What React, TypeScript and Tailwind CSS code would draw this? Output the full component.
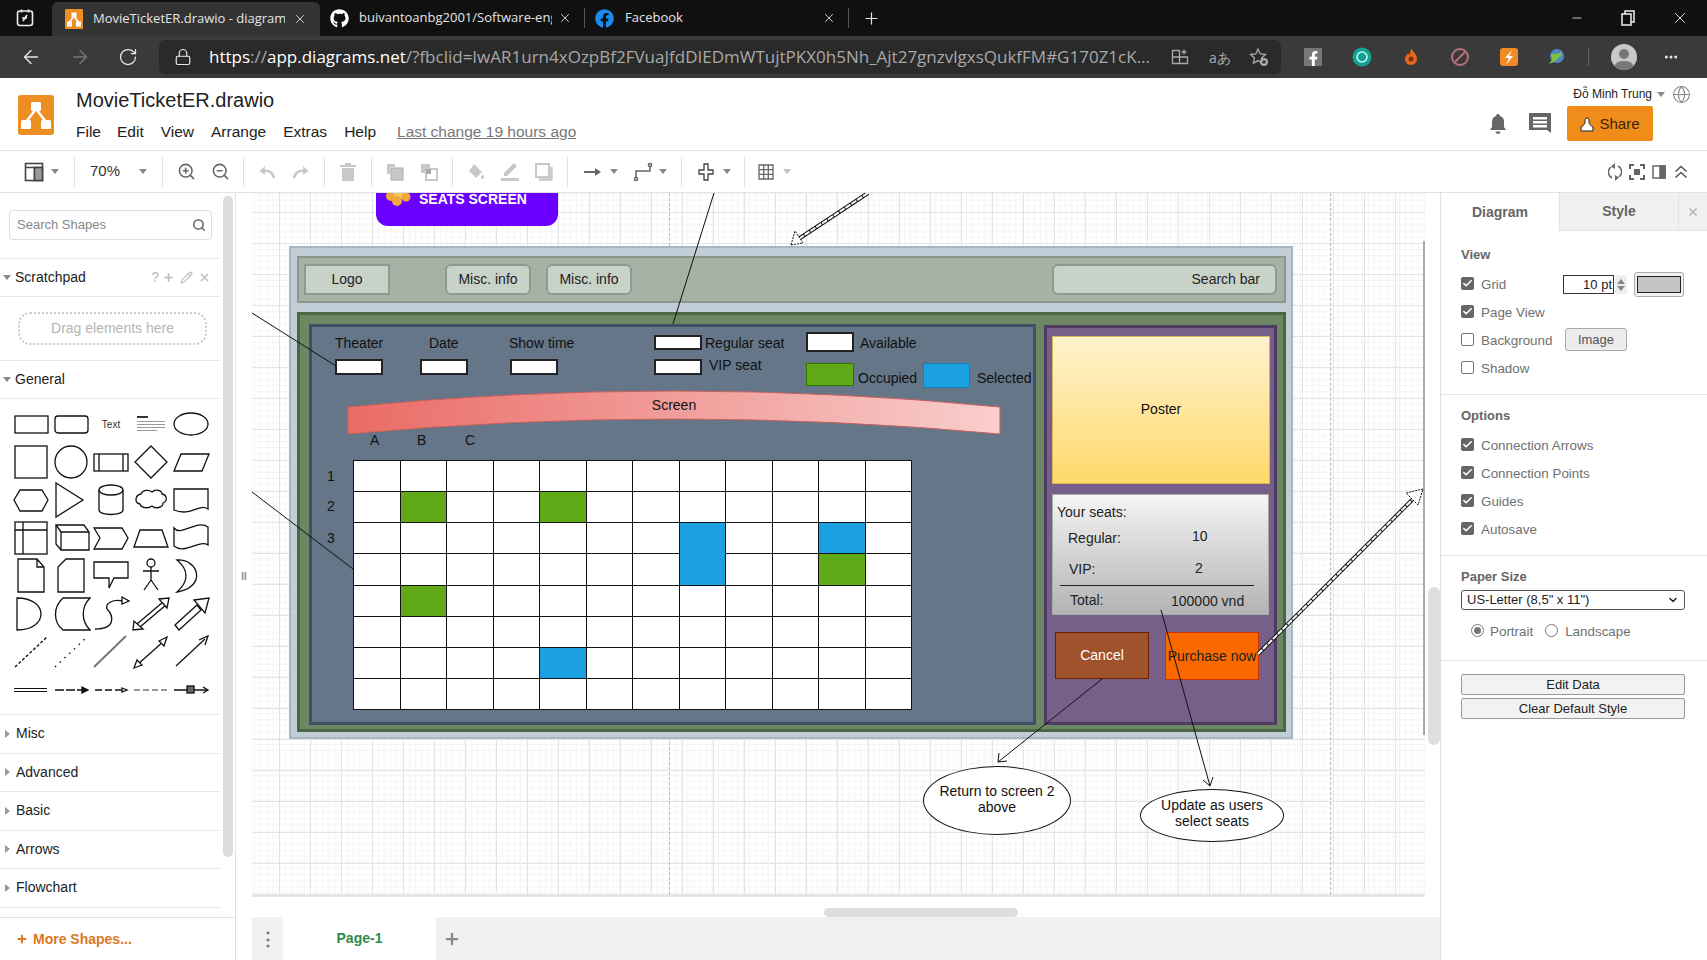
import { ArrowLeft, ArrowRight, Check, ChevronDown, Globe, Lock, Minus, MoreHorizontal, Pencil, Plus, RotateCw, Search, X, ZoomIn, ZoomOut } from "lucide-react";
import { FaFacebook, FaFacebookF, FaGithub } from "react-icons/fa";
import type { ReactNode } from "react";

function Caret({ className = "" }: { className?: string }) {
  return <span className={`inline-block h-0 w-0 shrink-0 border-x-[4px] border-t-[5px] border-x-transparent border-t-[#8a8a8a] ${className}`} />;
}

function Divider({ className = "" }: { className?: string }) {
  return <span className={`h-[30px] w-px shrink-0 bg-[#e0e0e0] ${className}`} />;
}

function Tool({ children, className = "w-[34px]" }: { children: ReactNode; className?: string }) {
  return <span className={`flex h-[30px] shrink-0 items-center justify-center ${className}`}>{children}</span>;
}

function DrawioLogo() {
  return (
    <svg viewBox="0 0 36 40" className="h-10 w-9 shrink-0">
      <rect width="36" height="40" rx="3" fill="#ee8f24" />
      <path d="M18 14 L8 27 M18 14 L28 27" stroke="#fff" strokeWidth="2.5" />
      <rect x="13" y="7" width="10" height="9" rx="1.5" fill="#fff" />
      <rect x="3" y="25" width="10" height="9" rx="1.5" fill="#fff" />
      <rect x="23" y="25" width="10" height="9" rx="1.5" fill="#fff" />
    </svg>
  );
}

function BrowserTabs() {
  return (
    <div className="flex h-9 shrink-0 bg-[#101010] font-['Open_Sans',sans-serif] text-[13px] text-[#e4e4e4]">
      <div className="flex w-[52px] items-center justify-center">
        <svg viewBox="0 0 20 20" className="mr-[2px] h-5 w-5" fill="none" stroke="#eee" strokeWidth="1.6">
          <rect x="2.5" y="3" width="15" height="14.5" rx="2.5" />
          <path d="M6.5 1.5v3M13.5 1.5v3M8 13l4-6M7 10h5" />
        </svg>
      </div>
      <div className="mt-[2px] flex w-[268px] items-center rounded-t-md bg-[#333] pl-[13px]">
        <svg viewBox="0 0 18 20" className="h-5 w-[18px] shrink-0">
          <rect width="18" height="20" rx="1" fill="#ee8f24" />
          <path d="M9 7 L4 14 M9 7 L14 14" stroke="#fff" strokeWidth="1.5" />
          <rect x="6.5" y="3.5" width="5" height="5" fill="#fff" />
          <rect x="2" y="12.5" width="5" height="5" fill="#fff" />
          <rect x="11" y="12.5" width="5" height="5" fill="#fff" />
        </svg>
        <span className="ml-[10px] w-[192px] overflow-hidden whitespace-nowrap">MovieTicketER.drawio - diagrams.net</span>
        <X className="ml-[8px] h-[14px] w-[14px]" strokeWidth={1.5} />
      </div>
      <div className="flex w-[264px] items-center pl-[10px]">
        <FaGithub className="h-[19px] w-[19px] shrink-0 text-white" />
        <span className="ml-[10px] w-[193px] overflow-hidden whitespace-nowrap">buivantoanbg2001/Software-engineering</span>
        <X className="ml-[6px] h-[14px] w-[14px]" strokeWidth={1.5} />
      </div>
      <span className="my-[8px] w-px bg-[#555]" />
      <div className="flex w-[263px] items-center pl-[10px]">
        <FaFacebook className="h-[19px] w-[19px] shrink-0 text-[#1b8bf0]" />
        <span className="ml-[11px] w-[200px]">Facebook</span>
        <X className="ml-[-3px] h-[14px] w-[14px]" strokeWidth={1.5} />
      </div>
      <span className="my-[8px] w-px bg-[#555]" />
      <div className="flex w-[44px] items-center justify-center">
        <Plus className="h-[19px] w-[19px]" strokeWidth={1.5} />
      </div>
      <div className="ml-auto flex items-center pr-[18px]">
        <Minus className="mr-[37px] h-[14px] w-[14px]" strokeWidth={1.5} />
        <svg viewBox="0 0 14 16" className="mr-[36px] h-4 w-[14px]" fill="none" stroke="#eee" strokeWidth="1.5">
          <rect x="1" y="4" width="9" height="11" />
          <path d="M4 4V1h9v11h-3" />
        </svg>
        <X className="h-[18px] w-[18px]" strokeWidth={1.3} />
      </div>
    </div>
  );
}

function AddressBar() {
  return (
    <div className="flex h-[42px] shrink-0 items-center bg-[#3a3a3a] text-[#e8e8e8]">
      <ArrowLeft className="ml-[20px] h-[22px] w-[22px]" strokeWidth={1.5} />
      <ArrowRight className="ml-[27px] h-[22px] w-[22px] text-[#777]" strokeWidth={1.5} />
      <RotateCw className="ml-[27px] h-[20px] w-[20px]" strokeWidth={1.5} />
      <div className="ml-[21px] flex h-[34px] w-[1122px] items-center rounded-md bg-[#2a2a2a] font-['Open_Sans',sans-serif] text-[17px]">
        <Lock className="ml-[15px] h-[18px] w-[18px]" strokeWidth={1.6} />
        <span className="ml-[17px] w-[942px] overflow-hidden whitespace-nowrap text-[#a8a8a8]">
          <span className="text-white">https</span>://<span className="text-white">app.diagrams.net</span>/?fbclid=IwAR1urn4xOzpBf2FVuaJfdDIEDmWTujtPKX0h5Nh_Ajt27gnzvlgxsQukfFM#G170Z1cK...
        </span>
        <svg viewBox="0 0 18 18" className="ml-[20px] h-[18px] w-[18px]" fill="none" stroke="#aaa" strokeWidth="1.3">
          <path d="M1.5 2.5h7v13h-7zM8.5 9h8v6.5h-8M1.5 9h7M13 1.5v5M10.5 4h5" />
        </svg>
        <span className="ml-[20px] w-[22px] text-[14px] text-[#aaa]">aあ</span>
        <svg viewBox="0 0 20 20" className="ml-[18px] h-5 w-5" fill="none" stroke="#aaa" strokeWidth="1.3">
          <path d="M9 2l2.2 5 5.3.5-4 3.6 1.1 5.2L9 13.6l-4.6 2.7 1.1-5.2-4-3.6L6.800 7z" />
          <circle cx="15" cy="15" r="4" fill="#aaa" stroke="none" />
          <path d="M15 13v4M13 15h4" stroke="#333" />
        </svg>
      </div>
      <span className="ml-[23px] flex h-[18px] w-[18px] items-end justify-center bg-[#777]">
        <FaFacebookF className="h-[15px] w-[15px] text-white" />
      </span>
      <svg viewBox="0 0 20 20" className="ml-[30px] h-5 w-5">
        <circle cx="10" cy="10" r="9.500" fill="#15a08f" />
        <circle cx="10" cy="10" r="5" fill="none" stroke="#bff" strokeWidth="1.600" />
      </svg>
      <svg viewBox="0 0 20 20" className="ml-[29px] h-5 w-5">
        <path d="M10 1c1 3 6 6 6 11a6 6 0 0 1-12 0c0-3 2-4 3-6 1 1 1 2 1 2 1-2 2-4 2-7z" fill="#e8671b" />
        <circle cx="10" cy="12" r="2.500" fill="#7a2c0a" />
      </svg>
      <svg viewBox="0 0 20 20" className="ml-[29px] h-5 w-5" fill="none" stroke="#b5707a" strokeWidth="2">
        <circle cx="10" cy="10" r="8" />
        <path d="M5 15L15 5" />
      </svg>
      <svg viewBox="0 0 20 20" className="ml-[29px] h-5 w-5">
        <rect x="1" y="1" width="18" height="18" rx="3" fill="#f08a24" />
        <path d="M13 3L6 11h4l-3 7 7-9h-4z" fill="#fff" />
      </svg>
      <svg viewBox="0 0 20 20" className="ml-[28px] h-5 w-5">
        <circle cx="10" cy="9" r="7" fill="#4f86c6" />
        <path d="M4 8c3-3 6 1 10-3 2 3 0 5-3 6-2 3-6 6-9 5 3-2 4-4 2-8z" fill="#7fc241" />
      </svg>
      <span className="ml-[21px] h-[18px] w-px bg-[#666]" />
      <span className="ml-[22px] flex h-[26px] w-[26px] items-end justify-center overflow-hidden rounded-full bg-[#c9c9c9]">
        <svg viewBox="0 0 26 26" className="h-[26px] w-[26px]" fill="#777">
          <circle cx="13" cy="10" r="5" />
          <path d="M3 26c0-8 5-9 10-9s10 1 10 9z" />
        </svg>
      </span>
      <MoreHorizontal className="ml-[26px] h-4 w-4" strokeWidth={2.5} />
    </div>
  );
}

function AppHeader() {
  return (
    <div className="flex h-[72px] shrink-0 bg-white">
      <div className="ml-[18px] mt-[17px]">
        <DrawioLogo />
      </div>
      <div className="ml-[22px] flex flex-col">
        <span className="mt-[9px] text-[20px] leading-[26px] text-[#222]">MovieTicketER.drawio</span>
        <div className="mt-[9px] flex text-[15.5px] leading-5 text-[#222]">
          <span>File</span>
          <span className="ml-[16px]">Edit</span>
          <span className="ml-[17px]">View</span>
          <span className="ml-[17px]">Arrange</span>
          <span className="ml-[17px]">Extras</span>
          <span className="ml-[17px]">Help</span>
          <span className="ml-[21px] text-[#777] underline">Last change 19 hours ago</span>
        </div>
      </div>
      <div className="ml-auto flex flex-col items-end pr-[16px]">
        <div className="mt-[7px] flex h-[18px] items-center text-[12px] text-[#222]">
          <span>Đỗ Minh Trung</span>
          <Caret className="ml-[5px]" />
          <Globe className="ml-[7px] h-[19px] w-[19px] text-[#888]" strokeWidth={1.3} />
        </div>
        <div className="mr-[38px] mt-[3px] flex items-center">
          <svg viewBox="0 0 18 22" className="mr-[21px] h-[22px] w-[18px]" fill="#666">
            <path d="M9 1a2 2 0 0 1 2 2c3 1 4 3 4 6v5l2 3H1l2-3V9c0-3 1-5 4-6a2 2 0 0 1 2-2zM6.500 18.500h5a2.500 2.500 0 0 1-5 0z" />
          </svg>
          <svg viewBox="0 0 24 24" className="mr-[15px] h-[24px] w-[24px]" fill="#666">
            <path d="M1 1h22v20l-4-3H1z" />
            <path d="M5 5h14v2.500H5zM5 9h14v2.500H5zM5 13h14v2.500H5z" fill="#fff" />
          </svg>
          <div className="flex h-[35px] w-[86px] items-center justify-center rounded-[2px] bg-[#f08c1a] pt-[2px] text-[15px] text-[#3a2308]">
            <svg viewBox="0 0 14 16" className="mr-[5px] h-4 w-[14px]" fill="#fff" stroke="#222" strokeWidth="1">
              <path d="M7 1c2 0 2 2 2 4 0 2 1 3 4 5v4H1v-4c3-2 4-3 4-5 0-2 0-4 2-4z" />
            </svg>
            Share
          </div>
        </div>
      </div>
    </div>
  );
}

function Toolbar() {
  const on = "#666";
  const off = "#c8c8c8";
  return (
    <div className="flex h-[43px] shrink-0 items-center border-y border-[#e2e2e2] bg-white pl-[17px] text-[15px] text-[#333]">
      <Tool>
        <svg viewBox="0 0 20 20" className="h-5 w-5" fill="none" stroke="#444" strokeWidth="1.600">
          <rect x="1.500" y="1.500" width="17" height="17" />
          <path d="M1.500 5.500h17M10.500 5.500v13" />
          <rect x="10.500" y="5.500" width="8" height="13" fill="#999" />
        </svg>
      </Tool>
      <Caret className="mr-[15px]" />
      <Divider />
      <span className="ml-[15px] w-[31px]">70%</span>
      <Caret className="ml-[18px]" />
      <Divider className="ml-[15px] mr-[6px]" />
      <Tool><ZoomIn className="h-[19px] w-[19px] text-[#666]" strokeWidth={2} /></Tool>
      <Tool><ZoomOut className="h-[19px] w-[19px] text-[#666]" strokeWidth={2} /></Tool>
      <Divider className="mx-[6px]" />
      <Tool>
        <svg viewBox="0 0 18 14" className="h-[14px] w-[18px]" fill="none" stroke={off} strokeWidth="2.500">
          <path d="M16 13C15 7 10 5 5 6" />
          <path d="M7 1L1.500 6 7 10" fill={off} stroke="none" />
        </svg>
      </Tool>
      <Tool>
        <svg viewBox="0 0 18 14" className="h-[14px] w-[18px]" fill="none" stroke={off} strokeWidth="2.500">
          <path d="M2 13C3 7 8 5 13 6" />
          <path d="M11 1l5.500 5L11 10" fill={off} stroke="none" />
        </svg>
      </Tool>
      <Divider className="mx-[6px]" />
      <Tool>
        <svg viewBox="0 0 16 18" className="h-[18px] w-4" fill={off}>
          <path d="M0 2h16v2H0zM5 0h6v2H5zM2 5h12v13H2z" />
        </svg>
      </Tool>
      <Divider className="mx-[6px]" />
      <Tool>
        <svg viewBox="0 0 18 18" className="h-[18px] w-[18px]" fill={off}>
          <path d="M1 1h8v3H4v7H1z" />
          <rect x="5" y="5" width="12" height="12" fill={off} stroke="#aaa" />
        </svg>
      </Tool>
      <Tool>
        <svg viewBox="0 0 18 18" className="h-[18px] w-[18px]" fill={off}>
          <rect x="1" y="1" width="9" height="9" />
          <rect x="6" y="6" width="11" height="11" fill="#fff" stroke={off} strokeWidth="2" />
          <rect x="6" y="6" width="5" height="5" fill="#aaa" />
        </svg>
      </Tool>
      <Divider className="mx-[6px]" />
      <Tool>
        <svg viewBox="0 0 18 18" className="h-[18px] w-[18px]" fill={off}>
          <path d="M7 1l8 8-6 6-7-7z" />
          <path d="M15.500 11c1.500 2 2 3 1 4.500s-3 0-2.500-1.500z" />
        </svg>
      </Tool>
      <Tool>
        <svg viewBox="0 0 20 20" className="h-5 w-5" fill={off}>
          <path d="M14 1l3 3L7 14H4v-3z" />
          <rect x="1" y="16" width="18" height="3" />
        </svg>
      </Tool>
      <Tool>
        <svg viewBox="0 0 18 18" className="h-[18px] w-[18px]" fill="none" stroke={off} strokeWidth="2">
          <rect x="1" y="1" width="13" height="13" />
          <path d="M4 16.500h12.500V4" strokeWidth="2.500" />
        </svg>
      </Tool>
      <Divider className="ml-[6px] mr-[8px]" />
      <Tool className="w-[34px]">
        <svg viewBox="0 0 18 10" className="h-[10px] w-[18px]" fill={on}>
          <path d="M0 4h12v2H0zM11 1l6 4-6 4z" />
        </svg>
      </Tool>
      <Caret />
      <Tool className="ml-[9px] w-[32px]">
        <svg viewBox="0 0 18 20" className="h-5 w-[18px]" fill="none" stroke={on} strokeWidth="1.500">
          <path d="M2 17v-8h14V3" />
          <circle cx="2" cy="17" r="1.600" fill="#fff" />
          <circle cx="16" cy="3" r="1.600" fill="#fff" />
        </svg>
      </Tool>
      <Caret className="mr-[14px]" />
      <Divider className="mr-[7px]" />
      <Tool>
        <svg viewBox="0 0 16 18" className="h-[18px] w-4" fill="none" stroke="#444" strokeWidth="1.300">
          <path d="M6 1h4v6h5v4h-5v6H6v-6H1V7h5z" />
        </svg>
      </Tool>
      <Caret className="mr-[13px]" />
      <Divider className="mr-[6px]" />
      <Tool className="w-[30px]">
        <svg viewBox="0 0 16 16" className="h-4 w-4" fill="none" stroke={on} strokeWidth="1.300">
          <path d="M1 1h14v14H1zM1 5.700h14M1 10.300h14M5.700 1v14M10.300 1v14" />
        </svg>
      </Tool>
      <Caret className="ml-[2px] border-t-[#c0c0c0]" />
      <div className="ml-auto flex pr-[15px] text-[#666]">
        <Tool className="w-[22px]">
          <svg viewBox="0 0 14 18" className="h-[18px] w-[14px]" fill="none" stroke="#666" strokeWidth="1.500">
            <path d="M3 4a6.500 6.500 0 0 0 1 11M11 14a6.500 6.500 0 0 0-1-11" />
            <path d="M7 0L3 3.500 7 6M7 18l4-3.500L7 12" fill="#666" stroke="none" />
          </svg>
        </Tool>
        <Tool className="w-[22px]">
          <svg viewBox="0 0 16 16" className="h-4 w-4" fill="#666">
            <path d="M0 0h5v2H2v3H0zM11 0h5v5h-2V2h-3zM0 11h2v3h3v2H0zM14 11h2v5h-5v-2h3z" />
            <rect x="5" y="5" width="6" height="6" />
          </svg>
        </Tool>
        <Tool className="w-[22px]">
          <svg viewBox="0 0 14 14" className="h-[14px] w-[14px]" fill="none" stroke="#666" strokeWidth="1.500">
            <rect x="1" y="1" width="12" height="12" />
            <rect x="8" y="1" width="5" height="12" fill="#666" />
          </svg>
        </Tool>
        <Tool className="w-[22px]">
          <svg viewBox="0 0 14 14" className="h-[14px] w-[14px]" fill="none" stroke="#555" strokeWidth="1.600">
            <path d="M1.500 6.500L7 1.500l5.500 5M1.500 12.500L7 7.500l5.500 5" />
          </svg>
        </Tool>
      </div>
    </div>
  );
}

const shapeStroke = { fill: "none", stroke: "#111", strokeWidth: 1.3 };

const shapes: ReactNode[] = [
  <rect x="4" y="11" width="33" height="17" {...shapeStroke} />,
  <rect x="4" y="11" width="33" height="17" rx="3" {...shapeStroke} />,
  null,
  <g fill="#999"><rect x="6" y="11" width="11" height="2" fill="#333" /><rect x="6" y="16" width="28" height="1" /><rect x="6" y="19" width="28" height="1" /><rect x="6" y="22" width="28" height="1" /><rect x="6" y="25" width="20" height="1" /></g>,
  <ellipse cx="20" cy="19" rx="17" ry="11" {...shapeStroke} />,
  <rect x="4" y="3" width="32" height="32" {...shapeStroke} />,
  <circle cx="20" cy="19" r="16" {...shapeStroke} />,
  <g {...shapeStroke}><rect x="3" y="11" width="34" height="17" /><path d="M8 11v17M32 11v17" /></g>,
  <path d="M20 3L36 19 20 35 4 19z" {...shapeStroke} />,
  <path d="M10 11H38L31 28H3z" {...shapeStroke} />,
  <path d="M9 9H31L37 19 31 30H9L3 19z" {...shapeStroke} />,
  <path d="M5 2L32 19 5 36z" {...shapeStroke} />,
  <g {...shapeStroke}><path d="M8 9v20c0 6 24 6 24 0V9" /><ellipse cx="20" cy="9" rx="12" ry="5" /></g>,
  <path d="M10 13c2-5 9-4 11-2 3-3 10-2 10 2 5 1 6 7 1 9 0 5-8 6-11 3-4 3-11 2-12-2-6-1-5-9 1-10z" {...shapeStroke} />,
  <path d="M3 8H37V28C28 22 20 36 3 29z" {...shapeStroke} />,
  <g {...shapeStroke}><rect x="4" y="3" width="32" height="32" /><path d="M4 11h32M12 3v32" /></g>,
  <g {...shapeStroke}><path d="M5 6H33L38 13V31H10L5 25z" /><path d="M5 6L10 13H38M10 13V31" /></g>,
  <path d="M3 9H31L37 19 31 30H3L9 19z" {...shapeStroke} />,
  <path d="M9 11H31L37 28H3z" {...shapeStroke} />,
  <path d="M3 9C10 18 26 0 37 8V26C28 20 14 36 3 27z" {...shapeStroke} />,
  <path d="M7 2H26L33 10V35H7zM26 2V10H33" {...shapeStroke} />,
  <path d="M15 2H33V35H7V10z" {...shapeStroke} />,
  <path d="M3 5H37V21H23L18 31V21H3z" {...shapeStroke} />,
  <g {...shapeStroke}><circle cx="20" cy="6" r="4" /><path d="M20 10V23M12 14H28M20 23L13 33M20 23L27 33" /></g>,
  <path d="M6 3C28 2 36 30 6 35 18 24 18 13 6 3z" {...shapeStroke} />,
  <path d="M6 3C38 3 38 35 6 35z" {...shapeStroke} />,
  <path d="M12 3H39C30 12 30 26 39 35H12C2 27 2 12 12 3z" {...shapeStroke} />,
  <g {...shapeStroke}><path d="M4 34C26 34 22 20 16 14 14 8 22 4 32 6" /><path d="M31 2L38 6 31 9z" fill="#fff" /></g>,
  <g {...shapeStroke}><path d="M6 29L32 7M9 32L35 10" /><path d="M28 4L38 3 36 13zM3 26L2 35 12 34z" fill="#fff" /></g>,
  <g {...shapeStroke}><path d="M4 30L26 10 30 15 8 35z" /><path d="M23 5L38 3 34 18z" fill="#fff" /></g>,
  <path d="M4 34L36 4" fill="none" stroke="#111" strokeWidth="1.400" strokeDasharray="3 2" />,
  <path d="M4 34L36 4" fill="none" stroke="#111" strokeWidth="1.400" strokeDasharray="1.500 5" />,
  <path d="M3 34L35 3" fill="none" stroke="#777" strokeWidth="2" />,
  <g {...shapeStroke}><path d="M6 32L33 8" /><path d="M28 8L36 4 33 13zM3 35L6 27 11 32z" fill="#fff" /></g>,
  <g {...shapeStroke}><path d="M5 33L34 6" /><path d="M28 7L37 3 34 12" /></g>,
  <g fill="none" stroke="#111" strokeWidth="1"><path d="M3 17.500h33M3 20.500h33" /></g>,
  <g {...shapeStroke}><path d="M4 19h28" strokeDasharray="9 2" /><path d="M31 16l6 3-6 3z" fill="#111" /></g>,
  <g {...shapeStroke}><path d="M4 19h28" strokeDasharray="7 3" /><path d="M31 17l5 2-5 2z" fill="#fff" /></g>,
  <g fill="none" stroke="#333" strokeWidth="1.200"><path d="M3 19h33" strokeDasharray="6 3" /></g>,
  <g {...shapeStroke}><path d="M3 19h34" /><rect x="16" y="15" width="7" height="7" fill="#666" /><path d="M32 16l5 3-5 3" /></g>,
];

function Section({ title }: { title: string }) {
  return (
    <div className="flex h-[38.5px] items-center border-b border-[#e8e8e8] text-[14px] text-[#222]">
      <span className="ml-[5px] mr-[6px] inline-block h-0 w-0 border-y-[4px] border-l-[5px] border-y-transparent border-l-[#999]" />
      {title}
    </div>
  );
}

function Sidebar() {
  return (
    <div className="flex w-[236px] shrink-0 flex-col border-r border-[#e2e2e2] bg-white">
      <div className="flex h-[724px]">
        <div className="w-[220px]">
          <div className="h-[66px] border-b border-[#e8e8e8] pl-[9px] pt-[17px]">
            <div className="flex h-[30px] w-[203px] items-center justify-between rounded-[4px] border border-[#ddd] pl-[7px] pr-[5px] text-[13px] text-[#888]">
              Search Shapes
              <Search className="h-[14px] w-[14px] text-[#777]" strokeWidth={3} />
            </div>
          </div>
          <div className="flex h-[38px] items-center border-b border-[#e8e8e8] text-[14px] text-[#222]">
            <Caret className="ml-[3px] mr-[4px]" />
            Scratchpad
            <div className="ml-auto mr-[9px] flex items-center gap-[3px] text-[#bbb]">
              <span className="text-[14px]">?</span>
              <Plus className="h-[13px] w-[13px]" strokeWidth={3} />
              <Pencil className="ml-[2px] h-[13px] w-[13px]" strokeWidth={2} />
              <X className="ml-[2px] h-[13px] w-[13px] text-[#b8c4cc]" strokeWidth={3} />
            </div>
          </div>
          <div className="h-[64px] border-b border-[#e8e8e8] pl-[18px] pt-[15px]">
            <div className="flex h-[33px] w-[189px] items-center justify-center rounded-[12px] border-2 border-dotted border-[#ccc] text-[14px] text-[#b5b5b5]">
              Drag elements here
            </div>
          </div>
          <div className="flex h-[38px] items-center border-b border-[#e8e8e8] text-[14px] text-[#222]">
            <Caret className="ml-[3px] mr-[4px]" />
            General
          </div>
          <div className="h-[316px] border-b border-[#e8e8e8] pl-[11px] pt-[6px]">
            <div className="grid grid-cols-[repeat(5,40px)] auto-rows-[38px]">
              {shapes.map((shape, i) =>
                shape === null ? (
                  <span key={i} className="flex items-center justify-center text-[10px] text-[#333]">Text</span>
                ) : (
                  <svg key={i} viewBox="0 0 40 38" className="h-[38px] w-10">{shape}</svg>
                )
              )}
            </div>
          </div>
          <Section title="Misc" />
          <Section title="Advanced" />
          <Section title="Basic" />
          <Section title="Arrows" />
          <Section title="Flowchart" />
        </div>
        <div className="ml-[3px] mt-[3px] h-[661px] w-[10px] rounded-full bg-[#dcdcdc]" />
      </div>
      <div className="mt-auto flex h-[43px] items-center border-t border-[#e2e2e2] pl-[16px] text-[14px] font-bold text-[#d9791f]">
        <Plus className="mr-[5px] h-[12px] w-[12px]" strokeWidth={4} />
        More Shapes...
      </div>
    </div>
  );
}

const seats: Record<string, string> = {
  "1-1": "bg-[#60a917]",
  "1-4": "bg-[#60a917]",
  "2-7": "bg-[#1ba1e2] border-b-[#1ba1e2]",
  "3-7": "bg-[#1ba1e2]",
  "2-10": "bg-[#1ba1e2]",
  "3-10": "bg-[#60a917]",
  "4-1": "bg-[#60a917]",
  "6-4": "bg-[#1ba1e2]",
};

function SeatGrid() {
  const cells = [];
  for (let r = 0; r < 8; r++) {
    for (let c = 0; c < 12; c++) {
      cells.push(<div key={`${r}-${c}`} className={`border-b border-r border-[#111] ${seats[`${r}-${c}`] ?? "bg-white"}`} />);
    }
  }
  return (
    <div className="absolute left-[101px] top-[267px] grid h-[250px] w-[559px] grid-cols-12 grid-rows-8 border-l border-t border-[#111]">
      {cells}
    </div>
  );
}

function Diagram() {
  const box = "absolute border-2 border-[#222] bg-white";
  const label = "absolute text-[14px] leading-4 text-[#111]";
  const headerBtn = "absolute top-[71px] flex h-[31px] w-[86px] items-center justify-center border-2 border-[#8c9a93] bg-[#c8d2c8] text-[14px] text-[#222]";
  return (
    <>
      {/* popcorn heading cut off at the top of the canvas */}
      <div className="absolute left-[124px] top-[-20px] h-[53px] w-[182px] rounded-b-xl bg-[#6a00ff]">
        <span className="absolute left-[43px] top-[18px] text-[14px] font-bold leading-4 text-white">SEATS SCREEN</span>
        <svg viewBox="0 0 26 16" className="absolute left-[9px] top-[18px] h-4 w-[26px]" fill="#f0a83a">
          <circle cx="6" cy="5" r="5" />
          <circle cx="14" cy="4" r="5" fill="#f6c564" />
          <circle cx="21" cy="6" r="4.500" />
          <circle cx="12" cy="10" r="5" />
        </svg>
      </div>

      <div className="absolute left-[37px] top-[53px] h-[493px] w-[1004px] border-2 border-[#a9b6c0] bg-[#bac8d3]/90" />
      <div className="absolute left-[45px] top-[63px] h-[47px] w-[989px] border-2 border-[#8a9987] bg-[#a3b09f]/90" />
      <div className={headerBtn + " left-[52px]"}>Logo</div>
      <div className={headerBtn + " left-[193px] rounded-md"}>Misc. info</div>
      <div className={headerBtn + " left-[294px] rounded-md"}>Misc. info</div>
      <div className="absolute left-[800px] top-[71px] flex h-[31px] w-[225px] items-center justify-end rounded-md border-2 border-[#8c9a93] bg-[#c8d2c8] pr-[15px] text-[14px] text-[#222]">Search bar</div>

      <div className="absolute left-[45px] top-[119px] h-[420px] w-[989px] border-[3px] border-[#4a6741] bg-[#6d8764]" />
      <div className="absolute left-[57px] top-[131px] h-[401px] w-[727px] border-[3px] border-[#3c5163] bg-[#647687]" />
      <div className="absolute left-[792px] top-[132px] h-[400px] w-[233px] border-[3px] border-[#4f3a63] bg-[#76608a]" />

      <span className={label + " left-[83px] top-[142px]"}>Theater</span>
      <span className={label + " left-[177px] top-[142px]"}>Date</span>
      <span className={label + " left-[257px] top-[142px]"}>Show time</span>
      <div className={box + " left-[83px] top-[166px] h-[16px] w-[48px]"} />
      <div className={box + " left-[168px] top-[166px] h-[16px] w-[48px]"} />
      <div className={box + " left-[258px] top-[166px] h-[16px] w-[48px]"} />
      <div className={box + " left-[402px] top-[142px] h-[15px] w-[48px]"} />
      <div className={box + " left-[402px] top-[166px] h-[16px] w-[48px]"} />
      <span className={label + " left-[453px] top-[142px]"}>Regular seat</span>
      <span className={label + " left-[457px] top-[164px]"}>VIP seat</span>
      <div className={box + " left-[554px] top-[139px] h-[20px] w-[48px]"} />
      <span className={label + " left-[608px] top-[142px]"}>Available</span>
      <div className="absolute left-[554px] top-[170px] h-[23px] w-[48px] border border-[#2d7600] bg-[#60a917]" />
      <span className={label + " left-[606px] top-[177px]"}>Occupied</span>
      <div className="absolute left-[671px] top-[170px] h-[25px] w-[47px] border border-[#1a7fb5] bg-[#1ba1e2]" />
      <span className={label + " left-[725px] top-[177px]"}>Selected</span>

      <svg viewBox="0 0 660 60" className="absolute left-[92px] top-[195px] h-[60px] w-[660px]">
        <defs>
          <linearGradient id="screenFill" x1="0" x2="1" y1="0" y2="0">
            <stop offset="0" stopColor="#ea6b66" />
            <stop offset="1" stopColor="#f8cecc" />
          </linearGradient>
        </defs>
        <path d="M4 19Q330 -13 656 19V46Q330 16 4 46Z" fill="url(#screenFill)" stroke="#c9605c" strokeWidth="1" />
      </svg>
      <span className="absolute left-[346px] top-[204px] w-[152px] text-center text-[14px] leading-4 text-[#111]">Screen</span>
      <span className={label + " left-[118px] top-[239px]"}>A</span>
      <span className={label + " left-[165px] top-[239px]"}>B</span>
      <span className={label + " left-[213px] top-[239px]"}>C</span>
      <span className={label + " left-[75px] top-[275px]"}>1</span>
      <span className={label + " left-[75px] top-[305px]"}>2</span>
      <span className={label + " left-[75px] top-[337px]"}>3</span>
      <SeatGrid />

      <div className="absolute left-[800px] top-[143px] flex h-[148px] w-[218px] items-center justify-center border border-[#d6b656] bg-linear-to-b from-[#fff2cc] to-[#ffd966] pb-[2px] text-[14px] text-[#111]">Poster</div>
      <div className="absolute left-[800px] top-[301px] h-[121px] w-[217px] border border-[#aaa] bg-linear-to-b from-[#f5f5f5] to-[#b3b3b3] text-[14px] leading-4 text-[#222]">
        <span className="absolute left-[4px] top-[9px]">Your seats:</span>
        <span className="absolute left-[15px] top-[35px]">Regular:</span>
        <span className="absolute left-[139px] top-[33px]">10</span>
        <span className="absolute left-[16px] top-[66px]">VIP:</span>
        <span className="absolute left-[142px] top-[65px]">2</span>
        <div className="absolute left-[7px] top-[90px] h-px w-[194px] bg-[#222]" />
        <span className="absolute left-[17px] top-[97px]">Total:</span>
        <span className="absolute left-[118px] top-[98px]">100000 vnd</span>
      </div>
      <div className="absolute left-[803px] top-[439px] flex h-[47px] w-[94px] items-center justify-center border border-[#6d1f00] bg-[#a0522d] text-[14px] text-white">Cancel</div>
      <div className="absolute left-[913px] top-[439px] flex h-[48px] w-[94px] items-center justify-center border border-[#c73500] bg-[#fa6800] text-[14px] text-[#222]">Purchase now</div>

      <div className="absolute left-[671px] top-[573px] flex h-[69px] w-[148px] items-center justify-center rounded-[50%] border border-[#111] bg-white pb-[4px] text-center text-[14px] leading-4 text-[#111]">Return to screen 2<br />above</div>
      <div className="absolute left-[888px] top-[596px] flex h-[53px] w-[144px] items-center justify-center rounded-[50%] border border-[#111] bg-white pb-[6px] text-center text-[14px] leading-4 text-[#111]">Update as users<br />select seats</div>

      <svg className="pointer-events-none absolute left-0 top-0 h-[702px] w-[1173px]" fill="none" stroke="#111">
        <path d="M462 0L421 131" />
        <path d="M0 120L84 173" />
        <path d="M0 299L101 376" />
        <path d="M850 486L746 569M747 560L746 569 755 568" />
        <path d="M909 417L958 593M951 587L958 593 961 584" />
        <path d="M616 0L545 47" strokeWidth="4" />
        <path d="M616 0L545 47" stroke="#fff" strokeWidth="2" strokeDasharray="6 1" />
        <path d="M539 52L551 50 543 38Z" fill="#fff" strokeDasharray="2 1" />
        <path d="M1006 461L1160 307" strokeWidth="4" />
        <path d="M1006 461L1160 307" stroke="#fff" strokeWidth="2" strokeDasharray="6 1" />
        <path d="M1171 296L1154 300 1166 312Z" fill="#fff" strokeDasharray="2 1" />
      </svg>
    </>
  );
}

function Canvas() {
  return (
    <div className="flex min-w-0 flex-1 flex-col">
      <div className="flex h-[724px]">
        <div className="w-[1173px]">
          <div className="relative h-[702px] overflow-hidden bg-white bg-[linear-gradient(#e4e4e4_1px,transparent_1px),linear-gradient(90deg,#e4e4e4_1px,transparent_1px),linear-gradient(#f4f4f4_1px,transparent_1px),linear-gradient(90deg,#f4f4f4_1px,transparent_1px)] bg-[size:31px_31px,31px_31px,6.2px_6.2px,6.2px_6.2px] bg-[position:27px_19px,27px_19px,27px_19px,27px_19px]">
            <div className="absolute left-[417px] top-0 h-full border-l border-dashed border-[#bbb]" />
            <div className="absolute left-[1078px] top-0 h-full border-l border-dashed border-[#bbb]" />
            <div className="absolute left-[1171px] top-[48px] h-[494px] w-[2px] bg-[#aaa]" />
            <Diagram />
          </div>
          <div className="h-[22px] border-t-2 border-[#e6e6e6] pl-[572px] pt-[11px]">
            <div className="h-[9px] w-[194px] rounded-full bg-[#dedede]" />
          </div>
        </div>
        <div className="ml-[3px] mt-[394px] h-[158px] w-[12px] rounded-full bg-[#dedede]" />
      </div>
      <div className="flex h-[43px] items-center bg-[#f1f1f1]">
        <span className="w-[31px] text-center text-[18px] font-bold leading-none text-[#777]">⋮</span>
        <div className="flex h-full w-[153px] items-center justify-center bg-white text-[14px] font-bold text-[#2f8a4c]">Page-1</div>
        <Plus className="ml-[7px] h-[18px] w-[18px] text-[#888]" strokeWidth={3} />
      </div>
    </div>
  );
}

function Checkbox({ label, checked = true }: { label: string; checked?: boolean }) {
  return (
    <div className="flex h-[28px] items-center text-[13.4px] text-[#707070]">
      {checked ? (
        <span className="mb-[4px] flex h-[13px] w-[13px] items-center justify-center rounded-[2px] bg-[#666]">
          <Check className="h-[11px] w-[11px] text-white" strokeWidth={3.5} />
        </span>
      ) : (
        <span className="mb-[4px] h-[13px] w-[13px] rounded-[2px] border border-[#767676] bg-white" />
      )}
      <span className="ml-[7px]">{label}</span>
    </div>
  );
}

function RightPanel() {
  return (
    <div className="flex w-[267px] shrink-0 flex-col border-l border-[#e2e2e2] bg-white text-[13.4px]">
      <div className="flex h-[38px] text-[14px] font-bold text-[#666]">
        <div className="flex w-[118px] items-center justify-center">Diagram</div>
        <div className="flex w-[119px] items-center justify-center border-b border-l border-[#e2e2e2] bg-[#f1f1f1]">Style</div>
        <div className="flex flex-1 items-center justify-center border-b border-l border-[#e2e2e2] bg-[#f1f1f1]">
          <X className="h-[12px] w-[12px] text-[#b8b8b8]" strokeWidth={3.500} />
        </div>
      </div>
      <div className="h-[164px] border-b border-[#e6e6e6] pl-[20px] pt-[15px]">
        <div className="text-[13px] font-bold leading-[18px] text-[#666]">View</div>
        <div className="relative mt-[7px]">
          <Checkbox label="Grid" />
          <div className="absolute left-[102px] top-[1px] flex items-center">
            <div className="flex h-[19px] w-[51px] items-center justify-end border border-[#333] pr-[1px] text-[13px] text-[#222]">10 pt</div>
            <div className="ml-[1px] flex h-[19px] w-[12px] flex-col items-center justify-center gap-[2px] rounded-[2px] bg-[#eee]">
              <span className="h-0 w-0 border-x-[4px] border-b-[5px] border-x-transparent border-b-[#888]" />
              <span className="h-0 w-0 border-x-[4px] border-t-[5px] border-x-transparent border-t-[#888]" />
            </div>
            <div className="ml-[7px] flex h-[25px] w-[50px] items-center justify-center rounded-[3px] border border-[#aaa] bg-[#f2f2f2]">
              <span className="h-[17px] w-[44px] border border-[#222] bg-[#c4c4c4]" />
            </div>
          </div>
        </div>
        <Checkbox label="Page View" />
        <div className="relative">
          <Checkbox label="Background" checked={false} />
          <div className="absolute left-[104px] top-[1px] flex h-[23px] w-[62px] items-center justify-center rounded-[3px] border border-[#aaa] bg-[#ececec] text-[13px] text-[#555]">Image</div>
        </div>
        <Checkbox label="Shadow" checked={false} />
      </div>
      <div className="h-[161px] border-b border-[#e6e6e6] pl-[20px] pt-[12px]">
        <div className="mb-[7px] text-[13px] font-bold leading-[18px] text-[#666]">Options</div>
        <Checkbox label="Connection Arrows" />
        <Checkbox label="Connection Points" />
        <Checkbox label="Guides" />
        <Checkbox label="Autosave" />
      </div>
      <div className="h-[105px] border-b border-[#e6e6e6] pl-[20px] pt-[12px]">
        <div className="text-[13px] font-bold leading-[18px] text-[#666]">Paper Size</div>
        <div className="mt-[4px] flex h-[20px] w-[224px] items-center justify-between rounded-[3px] border border-[#555] pl-[5px] pr-[5px] text-[13px] text-[#222]">
          US-Letter (8,5" x 11")
          <ChevronDown className="h-[12px] w-[12px]" strokeWidth={3} />
        </div>
        <div className="ml-[10px] mt-[11px] flex h-[22px] items-center text-[#707070]">
          <span className="mb-[4px] flex h-[13px] w-[13px] items-center justify-center rounded-full border border-[#777]">
            <span className="h-[7px] w-[7px] rounded-full bg-[#777]" />
          </span>
          <span className="ml-[6px]">Portrait</span>
          <span className="mb-[4px] ml-[12px] h-[13px] w-[13px] rounded-full border border-[#777]" />
          <span className="ml-[7px]">Landscape</span>
        </div>
      </div>
      <div className="flex flex-col gap-[3px] pl-[20px] pt-[13px] text-[13px] text-[#222]">
        <div className="flex h-[21px] w-[224px] items-center justify-center rounded-[2px] border border-[#999] bg-[#f2f2f2]">Edit Data</div>
        <div className="flex h-[21px] w-[224px] items-center justify-center rounded-[2px] border border-[#999] bg-[#f2f2f2]">Clear Default Style</div>
      </div>
    </div>
  );
}

export default function App() {
  return (
    <div className="flex h-[960px] w-[1707px] flex-col overflow-hidden bg-white font-['Liberation_Sans',Arial,sans-serif]">
      <BrowserTabs />
      <AddressBar />
      <AppHeader />
      <Toolbar />
      <div className="flex min-h-0 flex-1">
        <Sidebar />
        <div className="flex w-[16px] shrink-0 items-center justify-center bg-white text-[10px] font-bold text-[#888]">ll</div>
        <Canvas />
        <RightPanel />
      </div>
    </div>
  );
}
